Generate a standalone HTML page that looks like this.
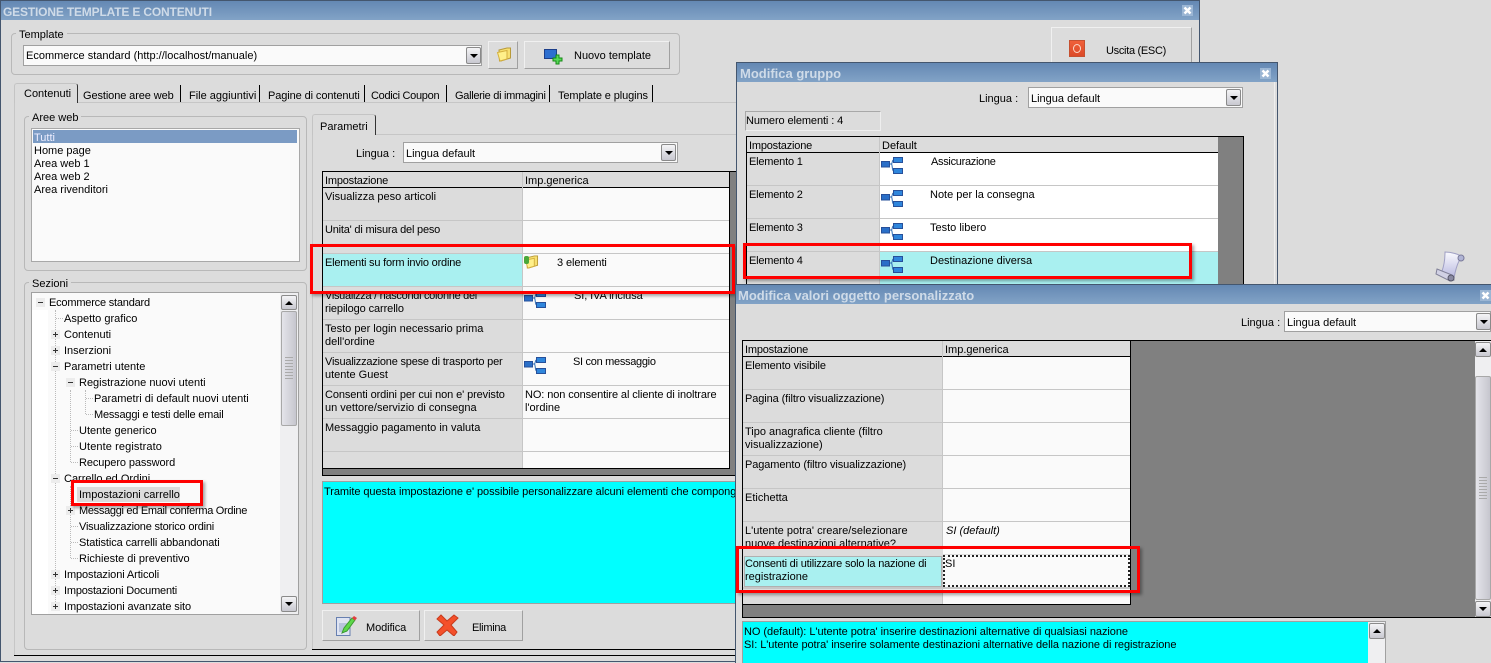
<!DOCTYPE html>
<html><head><meta charset="utf-8"><style>
html,body{margin:0;padding:0}
body{width:1491px;height:663px;overflow:hidden;background:#dcdcdc;position:relative;font:11px/13px "Liberation Sans",Arial,sans-serif;color:#000}
div,svg{position:absolute;box-sizing:border-box}
.t{white-space:pre;line-height:13px;height:13px;margin-top:1px}
.a{letter-spacing:-.1px}.b{letter-spacing:-.2px}.c{letter-spacing:-.3px}
.title{background:linear-gradient(#6488b3,#82a3c6);}
.tt{color:#cfdbe8;font-weight:bold;white-space:pre;line-height:14px;font-size:13px}
.x{width:11px;height:11px}
.grp{border:1px solid #b8b8b8;border-radius:4px}
.lab{background:#dcdcdc;padding:0 3px;white-space:pre;line-height:13px;margin-top:1px}
.combo{background:#fafafa;border:1px solid #a0a0a0}
.dd{background:linear-gradient(#f4f4f6,#c8c8d0);border:1px solid #8a8a8a;border-radius:2px}
.dd:after{content:"";position:absolute;left:50%;top:50%;margin:-2px 0 0 -4px;border:4px solid transparent;border-top:4px solid #000;border-bottom:0}
.up:after{border-top:0;border-bottom:4px solid #000}
.btn{border:1px solid;border-color:#f0f0f0 #a0a0a0 #a0a0a0 #f0f0f0;background:#dcdcdc}
.l{background:#c6c6c6}
.k{background:#000}
.g{background:#808080}
.red{border:3px solid #f00;box-shadow:2px 2px 3px rgba(0,0,0,.35)}
.tab{border:1px solid #c4c4c4;border-right:1px solid #333;border-bottom:0;border-radius:3px 3px 0 0}
.h{width:7px;height:1px;border-top:1px dotted #bbb}
.m,.p{width:9px;height:9px;background:#ececec}
.m:before,.p:before{content:"";position:absolute;left:2px;top:4px;width:5px;height:1px;background:#333}
.p:after{content:"";position:absolute;left:4px;top:2px;width:1px;height:5px;background:#333}
</style></head><body>
<svg width="0" height="0" style="position:absolute">
<symbol id="org" viewBox="0 0 23 17"><path d="M8.500 7h2M10.500 7C11.500 6 11 3 12.500 3M10.500 7C11.500 8 11 14 12.500 14" fill="none" stroke="#2f6db5"/><rect x=".5" y="4.500" width="8" height="5.500" fill="#2a6fc8" stroke="#27509a"/><rect x="12.500" y=".5" width="9" height="5" fill="#2f86dc" stroke="#27509a"/><rect x="12.500" y="11.500" width="9" height="5" fill="#2f86dc" stroke="#27509a"/></symbol>
<symbol id="fold" viewBox="0 0 16 15"><path d="M3 3L11 1 14.500 1V11L5 14H3.500Z" fill="#f7e070" stroke="#b89a3a"/><path d="M1.500 5.500L11 3.500V12L4 14Z" fill="#fff08a" stroke="#d4b040"/></symbol>
<symbol id="cl" viewBox="0 0 11 11"><rect width="11" height="11" fill="#9bb6d4"/><path d="M2.500 2.500L8.500 8.500M8.500 2.500L2.500 8.500" stroke="#fff" stroke-width="2.500"/></symbol>
</svg>

<!-- main window -->
<div style="left:0;top:0;width:1200px;height:662px;background:#dcdcdc;border:1px solid #44566e"></div>
<div class="title" style="left:1px;top:1px;width:1198px;height:19px"></div>
<div class="tt" style="left:3px;top:5px;font-size:12px;letter-spacing:-.17px">GESTIONE TEMPLATE E CONTENUTI</div>
<svg class="x" style="left:1182px;top:5px"><use href="#cl"/></svg>

<!-- template group -->
<div class="grp" style="left:11px;top:33px;width:669px;height:42px"></div>
<div class="lab" style="left:16px;top:28px">Template</div>
<div class="combo" style="left:23px;top:45px;width:459px;height:21px"></div>
<div class="t" style="left:26px;top:49px">Ecommerce standard (http://localhost/manuale)</div>
<div class="dd" style="left:466px;top:47px;width:15px;height:17px"></div>
<div class="btn" style="left:488px;top:41px;width:30px;height:28px"></div>
<svg style="left:496px;top:47px" width="16" height="15"><use href="#fold"/></svg>
<div class="btn" style="left:524px;top:41px;width:146px;height:28px"></div>
<svg style="left:544px;top:49px" width="19" height="16" viewBox="0 0 19 16"><rect x=".5" y=".5" width="12" height="9" fill="#2d6fd0" stroke="#1d3f8a"/><path d="M12 6h3v3h3v3h-3v3h-3v-3H9V9h3Z" fill="#58d858" stroke="#148a14"/></svg>
<div class="t" style="left:574px;top:49px">Nuovo template</div>

<div class="btn" style="left:1051px;top:27px;width:141px;height:40px"></div>
<div style="left:1069px;top:40px;width:16px;height:17px;background:linear-gradient(#f0603a,#dc4a28);border:1px solid #c65030"></div>
<div style="left:1073px;top:44px;width:8px;height:9px;border:1.500px solid #fbd8c8;border-radius:50%"></div>
<div class="t c" style="left:1106px;top:44px">Uscita (ESC)</div>

<!-- tabs -->
<div class="l" style="left:78px;top:102px;width:660px;height:1px"></div>
<div class="tab" style="left:14px;top:83px;width:64px;height:20px"></div>
<div class="k" style="left:180px;top:85px;width:1px;height:17px"></div>
<div class="k" style="left:259px;top:85px;width:1px;height:17px"></div>
<div class="k" style="left:364px;top:85px;width:1px;height:17px"></div>
<div class="k" style="left:446px;top:85px;width:1px;height:17px"></div>
<div class="k" style="left:549px;top:85px;width:1px;height:17px"></div>
<div class="k" style="left:652px;top:85px;width:1px;height:17px"></div>
<div class="t" style="left:24px;top:87px">Contenuti</div>
<div class="t a" style="left:83px;top:89px">Gestione aree web</div>
<div class="t" style="left:189px;top:89px">File aggiuntivi</div>
<div class="t a" style="left:268px;top:89px">Pagine di contenuti</div>
<div class="t c" style="left:371px;top:89px">Codici Coupon</div>
<div class="t c" style="left:455px;top:89px">Gallerie di immagini</div>
<div class="t a" style="left:558px;top:89px">Template e plugins</div>

<div class="k" style="left:14px;top:655px;width:1186px;height:1px"></div>
<div class="l" style="left:14px;top:103px;width:1px;height:552px"></div>
<div class="l" style="left:312px;top:135px;width:1px;height:514px"></div>

<!-- aree web -->
<div class="grp" style="left:24px;top:116px;width:283px;height:155px"></div>
<div class="lab" style="left:29px;top:111px">Aree web</div>
<div style="left:31px;top:128px;width:269px;height:134px;background:#fafafa;border:1px solid #a8a8a8"></div>
<div style="left:33px;top:130px;width:264px;height:13px;background:#7b9bc4"></div>
<div class="t" style="left:34px;top:131px;color:#eef">Tutti</div>
<div class="t" style="left:34px;top:144px">Home page</div>
<div class="t" style="left:34px;top:157px">Area web 1</div>
<div class="t" style="left:34px;top:170px">Area web 2</div>
<div class="t" style="left:34px;top:183px">Area rivenditori</div>

<!-- sezioni -->
<div class="grp" style="left:24px;top:282px;width:283px;height:368px"></div>
<div class="lab" style="left:29px;top:277px">Sezioni</div>
<div style="left:31px;top:292px;width:268px;height:323px;background:#fafafa;border:1px solid #a0a0a0"></div>
<div style="left:32px;top:310px;width:16px;height:304px;background:#fff"></div>
<div style="left:280px;top:293px;width:18px;height:321px;background:#efeff1"></div>
<div class="dd up" style="left:281px;top:295px;width:16px;height:15px"></div>
<div class="dd" style="left:281px;top:596px;width:16px;height:16px"></div>
<div style="left:281px;top:311px;width:16px;height:115px;background:linear-gradient(90deg,#e4e4ea,#c6c6ce);border:1px solid #a8a8a8;border-radius:2px"></div>
<div style="left:285px;top:357px;width:8px;height:23px;background:repeating-linear-gradient(#aaa 0 1px,transparent 1px 3px)"></div>

<!-- tree lines -->
<div style="left:55px;top:310px;width:0;height:298px;border-left:1px dotted #bbb"></div>
<div style="left:70px;top:390px;width:0;height:72px;border-left:1px dotted #bbb"></div>
<div style="left:70px;top:486px;width:0;height:72px;border-left:1px dotted #bbb"></div>
<div style="left:85px;top:390px;width:0;height:24px;border-left:1px dotted #bbb"></div>
<div class="h" style="left:56px;top:318px"></div>
<div class="h" style="left:71px;top:430px"></div>
<div class="h" style="left:71px;top:446px"></div>
<div class="h" style="left:71px;top:462px"></div>
<div class="h" style="left:71px;top:526px"></div>
<div class="h" style="left:71px;top:542px"></div>
<div class="h" style="left:71px;top:558px"></div>
<div class="h" style="left:86px;top:398px"></div>
<div class="h" style="left:86px;top:414px"></div>

<div class="t b" style="left:49px;top:296px">Ecommerce standard</div>
<div class="t" style="left:64px;top:312px">Aspetto grafico</div>
<div class="t" style="left:64px;top:328px">Contenuti</div>
<div class="t" style="left:64px;top:344px">Inserzioni</div>
<div class="t" style="left:64px;top:360px">Parametri utente</div>
<div class="t" style="left:79px;top:376px">Registrazione nuovi utenti</div>
<div class="t" style="left:94px;top:392px">Parametri di default nuovi utenti</div>
<div class="t b" style="left:94px;top:408px">Messaggi e testi delle email</div>
<div class="t" style="left:79px;top:424px">Utente generico</div>
<div class="t" style="left:79px;top:440px;letter-spacing:.1px">Utente registrato</div>
<div class="t a" style="left:79px;top:456px">Recupero password</div>
<div class="t" style="left:64px;top:472px">Carrello ed Ordini</div>
<div style="left:77px;top:487px;width:103px;height:15px;background:#dcdcdc"></div>
<div class="t" style="left:79px;top:488px">Impostazioni carrello</div>
<div class="t c" style="left:79px;top:504px">Messaggi ed Email conferma Ordine</div>
<div class="t b" style="left:79px;top:520px">Visualizzazione storico ordini</div>
<div class="t a" style="left:79px;top:536px">Statistica carrelli abbandonati</div>
<div class="t" style="left:79px;top:552px">Richieste di preventivo</div>
<div class="t a" style="left:64px;top:568px">Impostazioni Articoli</div>
<div class="t b" style="left:64px;top:584px">Impostazioni Documenti</div>
<div class="t a" style="left:64px;top:600px">Impostazioni avanzate sito</div>
<!-- expanders -->
<div class="m" style="left:36px;top:298px"></div>
<div class="p" style="left:51px;top:330px"></div>
<div class="p" style="left:51px;top:346px"></div>
<div class="m" style="left:51px;top:362px"></div>
<div class="m" style="left:66px;top:378px"></div>
<div class="m" style="left:51px;top:474px"></div>
<div class="p" style="left:66px;top:506px"></div>
<div class="p" style="left:51px;top:570px"></div>
<div class="p" style="left:51px;top:586px"></div>
<div class="p" style="left:51px;top:602px"></div>
<div class="red" style="left:71px;top:480px;width:132px;height:26px"></div>

<!-- parametri -->
<div class="l" style="left:376px;top:134px;width:362px;height:1px"></div>
<div class="tab" style="left:312px;top:114px;width:64px;height:21px"></div>
<div class="t" style="left:320px;top:120px">Parametri</div>
<div class="t" style="left:356px;top:147px">Lingua :</div>
<div class="combo" style="left:403px;top:142px;width:275px;height:21px"></div>
<div class="t" style="left:406px;top:147px">Lingua default</div>
<div class="dd" style="left:661px;top:144px;width:15px;height:17px"></div>

<!-- table 1 -->
<div class="g" style="left:322px;top:171px;width:416px;height:305px"></div>
<div class="k" style="left:322px;top:171px;width:416px;height:1px"></div>
<div class="k" style="left:322px;top:171px;width:1px;height:305px"></div>
<div class="k" style="left:322px;top:475px;width:416px;height:1px"></div>
<div style="left:323px;top:172px;width:406px;height:15px;background:#dcdcdc"></div>
<div class="k" style="left:323px;top:187px;width:407px;height:1px"></div>
<div class="k" style="left:323px;top:468px;width:407px;height:1px"></div>
<div class="k" style="left:729px;top:172px;width:1px;height:297px"></div>
<div style="left:323px;top:188px;width:199px;height:280px;background:#dcdcdc"></div>
<div style="left:523px;top:188px;width:206px;height:280px;background:#fafafa"></div>
<div class="l" style="left:522px;top:172px;width:1px;height:296px"></div>
<div style="left:323px;top:254px;width:199px;height:32px;background:#a9f0f0"></div>
<div class="l" style="left:323px;top:220px;width:406px;height:1px"></div>
<div class="l" style="left:323px;top:253px;width:406px;height:1px"></div>
<div class="l" style="left:323px;top:286px;width:406px;height:1px"></div>
<div class="l" style="left:323px;top:319px;width:406px;height:1px"></div>
<div class="l" style="left:323px;top:352px;width:406px;height:1px"></div>
<div class="l" style="left:323px;top:385px;width:406px;height:1px"></div>
<div class="l" style="left:323px;top:418px;width:406px;height:1px"></div>
<div class="l" style="left:323px;top:451px;width:406px;height:1px"></div>
<div class="t b" style="left:325px;top:174px">Impostazione</div>
<div class="t" style="left:525px;top:174px">Imp.generica</div>
<div class="t" style="left:325px;top:190px">Visualizza peso articoli</div>
<div class="t b" style="left:325px;top:223px">Unita' di misura del peso</div>
<div class="t b" style="left:325px;top:256px">Elementi su form invio ordine</div>
<div class="t c" style="left:325px;top:289px">Visualizza / nascondi colonne del</div>
<div class="t a" style="left:325px;top:302px">riepilogo carrello</div>
<div class="t" style="left:325px;top:322px">Testo per login necessario prima</div>
<div class="t" style="left:325px;top:335px">dell'ordine</div>
<div class="t b" style="left:325px;top:355px">Visualizzazione spese di trasporto per</div>
<div class="t" style="left:325px;top:368px">utente Guest</div>
<div class="t a" style="left:325px;top:388px">Consenti ordini per cui non e' previsto</div>
<div class="t" style="left:325px;top:401px">un vettore/servizio di consegna</div>
<div class="t" style="left:325px;top:421px">Messaggio pagamento in valuta</div>
<svg style="left:524px;top:255px" width="15" height="14"><use href="#fold"/></svg>
<div style="left:524px;top:256px;width:5px;height:8px;background:#4aa83a;border-radius:2px"></div>
<div class="t a" style="left:557px;top:256px">3 elementi</div>
<svg style="left:524px;top:291px" width="23" height="17"><use href="#org"/></svg>
<div class="t a" style="left:574px;top:289px">SI, IVA inclusa</div>
<svg style="left:524px;top:357px" width="23" height="17"><use href="#org"/></svg>
<div class="t c" style="left:573px;top:355px">SI con messaggio</div>
<div class="t a" style="left:525px;top:388px">NO: non consentire al cliente di inoltrare</div>
<div class="t" style="left:525px;top:401px">l'ordine</div>
<div class="red" style="left:310px;top:244px;width:425px;height:50px"></div>

<!-- help -->
<div style="left:322px;top:481px;width:416px;height:123px;background:#0ff;border:1px solid #a0a0a0;overflow:hidden"></div>
<div class="t" style="left:324px;top:485px;width:412px;overflow:hidden;letter-spacing:-.07px">Tramite questa impostazione e' possibile personalizzare alcuni elementi che compongono</div>
<div class="k" style="left:312px;top:649px;width:424px;height:1px"></div>
<div class="btn" style="left:322px;top:610px;width:98px;height:31px"></div>
<div class="btn" style="left:424px;top:610px;width:99px;height:31px"></div>
<svg style="left:336px;top:614px" width="22" height="23" viewBox="0 0 22 23"><path d="M.5 3.500H14V21.500H.5Z" fill="#dfe4f2" stroke="#6880b0"/><path d="M3 9h8v9H3z" fill="#b8c4dc"/><path d="M6 19L8 14 16 4 19 6 11 17Z" fill="#5ed84a" stroke="#3a9a30"/><path d="M16 4l2-2 3 2-2 2.500Z" fill="#e04040"/></svg>
<div class="t a" style="left:366px;top:621px">Modifica</div>
<svg style="left:436px;top:614px" width="23" height="22" viewBox="0 0 23 22"><path d="M1 5L5 1l6 6 7-6 4 3-7 7 6 7-3 4-7-6-7 6-3-4 7-7Z" fill="#f4502a" stroke="#c83a1c"/></svg>
<div class="t c" style="left:472px;top:621px">Elimina</div>

<!-- window 2 -->
<div style="left:736px;top:62px;width:542px;height:240px;background:#dcdcdc;border:1px solid #44566e;border-bottom:0"></div>
<div style="left:1274px;top:82px;width:1px;height:210px;background:#eee"></div>
<div class="title" style="left:737px;top:63px;width:540px;height:19px"></div>
<div class="tt" style="left:740px;top:67px">Modifica gruppo</div>
<svg class="x" style="left:1260px;top:68px"><use href="#cl"/></svg>
<div class="t" style="left:979px;top:92px">Lingua :</div>
<div class="combo" style="left:1028px;top:87px;width:215px;height:21px"></div>
<div class="t" style="left:1031px;top:92px">Lingua default</div>
<div class="dd" style="left:1226px;top:89px;width:15px;height:17px"></div>
<div style="left:745px;top:111px;width:136px;height:20px;border:1px solid;border-color:#a8a8a8 #eee #eee #a8a8a8"></div>
<div class="t a" style="left:746px;top:114px">Numero elementi : 4</div>
<div class="g" style="left:746px;top:136px;width:498px;height:160px"></div>
<div class="k" style="left:746px;top:136px;width:498px;height:1px"></div>
<div class="k" style="left:746px;top:136px;width:1px;height:160px"></div>
<div class="k" style="left:1243px;top:136px;width:1px;height:160px"></div>
<div style="left:747px;top:137px;width:471px;height:15px;background:#dcdcdc"></div>
<div class="k" style="left:747px;top:152px;width:471px;height:1px"></div>
<div style="left:747px;top:153px;width:132px;height:140px;background:#dcdcdc"></div>
<div style="left:880px;top:153px;width:338px;height:98px;background:#fff"></div>
<div style="left:880px;top:252px;width:338px;height:40px;background:#a9f0f0"></div>
<div class="l" style="left:879px;top:137px;width:1px;height:150px"></div>
<div class="l" style="left:747px;top:185px;width:471px;height:1px"></div>
<div class="l" style="left:747px;top:218px;width:471px;height:1px"></div>
<div class="l" style="left:747px;top:251px;width:471px;height:1px"></div>
<div class="t b" style="left:749px;top:139px">Impostazione</div>
<div class="t" style="left:882px;top:139px">Default</div>
<div class="t b" style="left:749px;top:155px">Elemento 1</div>
<div class="t b" style="left:749px;top:188px">Elemento 2</div>
<div class="t b" style="left:749px;top:221px">Elemento 3</div>
<div class="t b" style="left:749px;top:254px">Elemento 4</div>
<svg style="left:881px;top:157px" width="23" height="17"><use href="#org"/></svg>
<svg style="left:881px;top:190px" width="23" height="17"><use href="#org"/></svg>
<svg style="left:881px;top:223px" width="23" height="17"><use href="#org"/></svg>
<svg style="left:881px;top:256px" width="23" height="17"><use href="#org"/></svg>
<div class="t c" style="left:931px;top:155px">Assicurazione</div>
<div class="t" style="left:930px;top:188px">Note per la consegna</div>
<div class="t" style="left:930px;top:221px">Testo libero</div>
<div class="t" style="left:930px;top:254px">Destinazione diversa</div>
<div class="red" style="left:743px;top:243px;width:449px;height:36px"></div>

<!-- scroll icon -->
<svg style="left:1435px;top:251px" width="32" height="32" viewBox="0 0 32 32"><defs><linearGradient id="sc" x1="0" y1="0" x2="0" y2="1"><stop offset="0" stop-color="#fafafe"/><stop offset="1" stop-color="#b8b8e0"/></linearGradient></defs><path d="M10 1C16 1 24 3 29 7L24 10Q21 16 19 27L7 20Q10 12 10 1Z" fill="url(#sc)" stroke="#a0a0c4"/><circle cx="26" cy="7" r="3" fill="#b0b4d4" stroke="#7a7a9a"/><path d="M2 18L17 24 19 29 15 30 1 23Z" fill="#d0d0e4" stroke="#808098"/><circle cx="16" cy="27" r="3" fill="#8a8aa2" stroke="#555568"/></svg>

<!-- window 3 -->
<div style="left:735px;top:284px;width:756px;height:379px;background:#dcdcdc;border:1px solid #44566e;border-width:1px 0 0 1px"></div>
<div class="title" style="left:736px;top:285px;width:755px;height:19px"></div>
<div class="tt" style="left:738px;top:289px">Modifica valori oggetto personalizzato</div>
<svg class="x" style="left:1480px;top:290px"><use href="#cl"/></svg>
<div class="t" style="left:1241px;top:316px">Lingua :</div>
<div class="combo" style="left:1284px;top:311px;width:207px;height:21px"></div>
<div class="t" style="left:1287px;top:316px">Lingua default</div>
<div class="dd" style="left:1476px;top:313px;width:15px;height:17px"></div>

<div class="g" style="left:742px;top:340px;width:749px;height:278px"></div>
<div class="k" style="left:742px;top:340px;width:749px;height:1px"></div>
<div class="k" style="left:742px;top:340px;width:1px;height:278px"></div>
<div class="k" style="left:742px;top:617px;width:749px;height:1px"></div>
<div style="left:743px;top:341px;width:387px;height:15px;background:#dcdcdc"></div>
<div class="k" style="left:743px;top:356px;width:387px;height:1px"></div>
<div class="k" style="left:1130px;top:341px;width:1px;height:264px"></div>
<div class="k" style="left:743px;top:604px;width:388px;height:1px"></div>
<div style="left:743px;top:357px;width:199px;height:247px;background:#dcdcdc"></div>
<div style="left:943px;top:357px;width:187px;height:247px;background:#fafafa"></div>
<div class="l" style="left:942px;top:341px;width:1px;height:263px"></div>
<div class="l" style="left:743px;top:389px;width:387px;height:1px"></div>
<div class="l" style="left:743px;top:422px;width:387px;height:1px"></div>
<div class="l" style="left:743px;top:455px;width:387px;height:1px"></div>
<div class="l" style="left:743px;top:488px;width:387px;height:1px"></div>
<div class="l" style="left:743px;top:521px;width:387px;height:1px"></div>
<div class="l" style="left:743px;top:554px;width:387px;height:1px"></div>
<div class="l" style="left:743px;top:587px;width:387px;height:2px"></div>
<div class="t b" style="left:745px;top:343px">Impostazione</div>
<div class="t" style="left:945px;top:343px">Imp.generica</div>
<div class="t a" style="left:745px;top:359px">Elemento visibile</div>
<div class="t a" style="left:745px;top:392px">Pagina (filtro visualizzazione)</div>
<div class="t" style="left:745px;top:425px">Tipo anagrafica cliente (filtro</div>
<div class="t" style="left:745px;top:438px">visualizzazione)</div>
<div class="t a" style="left:745px;top:458px">Pagamento (filtro visualizzazione)</div>
<div class="t" style="left:745px;top:491px">Etichetta</div>
<div class="t" style="left:745px;top:524px">L'utente potra' creare/selezionare</div>
<div class="t" style="left:745px;top:537px">nuove destinazioni alternative?</div>
<div class="t" style="left:946px;top:524px;font-style:italic">SI (default)</div>
<div style="left:743px;top:546px;width:387px;height:10px;background:#dcdcdc"></div>
<div style="left:943px;top:546px;width:187px;height:8px;background:#fafafa"></div>
<div style="left:744px;top:556px;width:198px;height:31px;background:#a9f0f0;border:1px solid #b0b0b0"></div>
<div style="left:943px;top:555px;width:187px;height:32px;background:#fafafa;border:2px dotted #222"></div>
<div class="t b" style="left:745px;top:557px">Consenti di utilizzare solo la nazione di</div>
<div class="t" style="left:745px;top:570px">registrazione</div>
<div class="t" style="left:945px;top:557px">SI</div>
<div class="red" style="left:736px;top:546px;width:404px;height:47px"></div>

<!-- v scrollbar -->
<div style="left:1475px;top:341px;width:16px;height:276px;background:#efeff1"></div>
<div class="dd up" style="left:1475px;top:342px;width:16px;height:15px"></div>
<div style="left:1475px;top:376px;width:16px;height:224px;background:linear-gradient(90deg,#e4e4ea,#c6c6ce);border:1px solid #a8a8a8;border-radius:2px"></div>
<div style="left:1479px;top:477px;width:8px;height:23px;background:repeating-linear-gradient(#aaa 0 1px,transparent 1px 3px)"></div>
<div class="dd" style="left:1475px;top:601px;width:16px;height:16px"></div>

<!-- help 3 -->
<div style="left:742px;top:621px;width:644px;height:42px;background:#0ff;border:1px solid #a0a0a0;border-bottom:0"></div>
<div class="t" style="left:744px;top:625px;letter-spacing:-.05px">NO (default): L'utente potra' inserire destinazioni alternative di qualsiasi nazione</div>
<div class="t" style="left:744px;top:638px;letter-spacing:-.07px">SI: L'utente potra' inserire solamente destinazioni alternative della nazione di registrazione</div>
<div style="left:1368px;top:622px;width:17px;height:41px;background:#efeff1"></div>
<div class="dd up" style="left:1369px;top:623px;width:16px;height:16px"></div>
</body></html>
